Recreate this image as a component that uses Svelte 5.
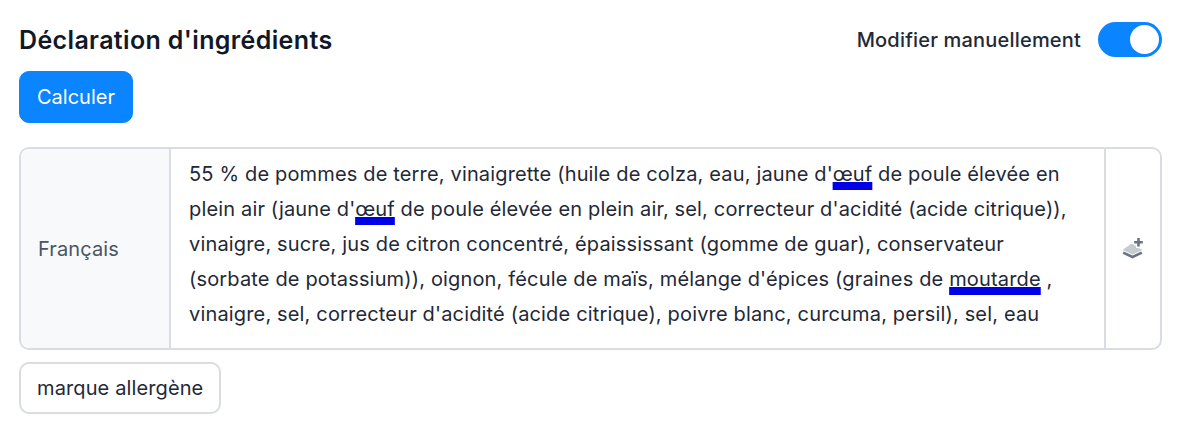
<script>
  let manual = $state(true);

  // Texte de la déclaration, les allergènes sont marqués
  const parts = [
    { text: "55 % de pommes de terre, vinaigrette (huile de colza, eau, jaune d'" },
    { text: 'œuf', mark: true },
    { text: " de poule élevée en plein air (jaune d'" },
    { text: 'œuf', mark: true },
    { text: " de poule élevée en plein air, sel, correcteur d'acidité (acide citrique)), vinaigre, sucre, jus de citron concentré, épaississant (gomme de guar), conservateur (sorbate de potassium)), oignon, fécule de maïs, mélange d'épices (graines de " },
    { text: 'moutarde', mark: true },
    { text: " , vinaigre, sel, correcteur d'acidité (acide citrique), poivre blanc, curcuma, persil), sel, eau" }
  ];
</script>

<div class="page">
  <div class="header">
    <h2>Déclaration d'ingrédients</h2>
    <div class="manual">
      <span>Modifier manuellement</span>
      <button class="toggle" class:on={manual} aria-label="Modifier manuellement" onclick={() => (manual = !manual)}>
        <span class="knob"></span>
      </button>
    </div>
  </div>

  <button class="btn primary">Calculer</button>

  <div class="row">
    <div class="lang">Français</div>
    <div class="text">
      {#each parts as part}{#if part.mark}<span class="allergen">{part.text}</span>{:else}{part.text}{/if}{/each}
    </div>
    <div class="action">
      <svg width="24" height="24" viewBox="0 0 24 24" aria-hidden="true">
        <path d="M1.5 13 L10.5 6.5 L15 9 L15 11 L17 11 L21.5 13 L11.5 17.5 Z" fill="#c6cad1"/>
        <path d="M2.2 15.6 L11.5 20 L20.8 15.6" fill="none" stroke="#6b7280" stroke-width="2.6"/>
        <path d="M17.5 1 V9.6 M13.2 5.3 H21.8" fill="none" stroke="#6b7280" stroke-width="2.6"/>
      </svg>
    </div>
  </div>

  <button class="btn outline">marque allergène</button>
</div>

<style>
  :global(body) {
    background: #fff;
  }
  .page {
    display: flex;
    flex-direction: column;
    align-items: flex-start;
    height: 428px;
    box-sizing: border-box;
    padding: 20px 38px 0 19px;
    font-family: Inter, "Liberation Sans", sans-serif;
    font-size: 20px;
    color: #111827;
  }
  .header {
    display: flex;
    align-items: center;
    justify-content: space-between;
    align-self: stretch;
    height: 39px;
    margin-bottom: 12px;
  }
  h2 {
    margin: 0;
    font-size: 25px;
    font-weight: 600;
    letter-spacing: 0.36px;
    color: #111827;
  }
  .manual {
    display: flex;
    align-items: center;
    gap: 17px;
    font-weight: 450;
    letter-spacing: 0.19px;
    color: #1f2937;
  }
  .toggle {
    display: flex;
    align-items: center;
    width: 64px;
    height: 35px;
    padding: 3px;
    border: none;
    border-radius: 18px;
    background: #d1d5db;
  }
  .toggle.on {
    justify-content: flex-end;
    background: #0a84ff;
  }
  .knob {
    display: block;
    width: 29px;
    height: 29px;
    border-radius: 50%;
    background: #fff;
  }
  .btn {
    height: 52px;
    padding: 0 16px;
    border-radius: 10px;
    font-family: inherit;
    font-size: 20px;
  }
  .primary {
    border: 1px solid #0a84ff;
    background: #0a84ff;
    color: #fff;
    padding: 0 17px;
  }
  .outline {
    border: 2px solid #d9dce3;
    background: #fff;
    color: #1f2937;
    letter-spacing: 0.12px;
  }
  .row {
    display: flex;
    align-self: stretch;
    height: 203px;
    box-sizing: border-box;
    margin: 24px 0 12px;
    border: 2px solid #d9dce3;
    border-radius: 10px;
    overflow: hidden;
  }
  .lang {
    display: flex;
    align-items: center;
    width: 150px;
    flex: none;
    box-sizing: border-box;
    padding-left: 17px;
    border-right: 2px solid #d9dce3;
    background: #f8f9fb;
    color: #4b5563;
    letter-spacing: 0.1px;
  }
  .text {
    flex: 1;
    padding: 8px 17px 8px 18px;
    line-height: 35px;
    color: #1f2937;
    letter-spacing: 0.16px;
  }
  .allergen {
    text-decoration: underline;
    text-decoration-color: #0000e6;
    text-decoration-thickness: 8px;
    text-decoration-skip-ink: none;
    text-underline-offset: 1px;
  }
  .action {
    display: flex;
    align-items: center;
    justify-content: center;
    width: 54px;
    flex: none;
    border-left: 2px solid #d9dce3;
  }
</style>
